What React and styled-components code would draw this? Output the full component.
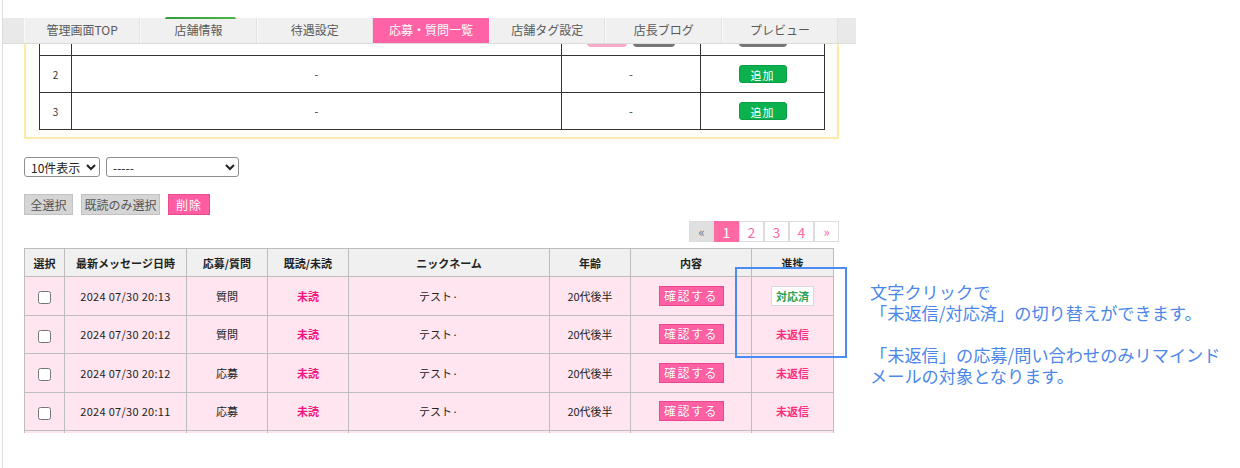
import React from "react";
import styled, { createGlobalStyle, css } from "styled-components";

const GlobalStyle = createGlobalStyle`
  html, body {
    margin: 0;
    padding: 0;
    background: #fff;
  }
  body {
    font-family: "Noto Sans CJK JP", "Noto Sans", sans-serif;
    color: #333;
  }
`;

const Screen = styled.div`
  position: relative;
  display: flex;
  width: 1240px;
  height: 468px;
  overflow: hidden;
`;

const Frame = styled.div`
  position: relative;
  flex: 0 0 853px;
  height: 468px;
  margin-left: 2px;
  border-left: 1px solid #dcdcdc;
  overflow: hidden;
`;

// fixed header that the page scrolls under
const Header = styled.div`
  position: absolute;
  top: 0;
  left: 0;
  right: 0;
  height: 44px;
  padding-top: 18px;
  box-sizing: border-box;
  background: #fff;
  z-index: 5;
`;

const Nav = styled.nav`
  display: grid;
  grid-template-columns: repeat(7, 116.3px);
  height: 26px;
  padding-left: 21px;
  box-sizing: border-box;
  background: #e9e9e9;
  border-bottom: 1px solid #dcdcdc;
`;

const Tab = styled.a`
  position: relative;
  display: flex;
  align-items: center;
  justify-content: center;
  padding-bottom: 3px;
  font-size: 12px;
  color: #5a5a5a;
  background: #f0f0f0;
  border-right: 1px solid #e2e2e2;
  border-left: 1px solid #fafafa;
  ${(p) =>
    p.$active &&
    css`
      background: #ff62a5;
      color: #fff;
      border-color: #ff62a5;
    `}
`;

const TabBadge = styled.span`
  position: absolute;
  top: -1px;
  left: 24px;
  width: 71px;
  height: 2px;
  border-radius: 2px 2px 0 0;
  background: linear-gradient(90deg, #2f9d3a, #4cb845);
`;

const Content = styled.div`
  display: flex;
  flex-direction: column;
  padding: 3px 14px 0 21px;
`;

const ShopBox = styled.div`
  width: 815px;
  box-sizing: border-box;
  padding: 13px 13px 7px;
  border: 2px solid #fde9a8;
  background: #fffdf7;
`;

const ShopTable = styled.table`
  width: 785px;
  table-layout: fixed;
  border-collapse: collapse;
  border: 1px solid #333;
  background: #fff;
`;

const ShopCell = styled.td`
  height: 36px;
  padding: 0;
  border: 1px solid #333;
  text-align: center;
  font-size: ${(p) => (p.$small ? "10px" : "11px")};
  color: #333;
`;

// buttons of the row scrolled under the header, only their lower edge shows
const MiniButton = styled.span`
  display: inline-block;
  width: ${(p) => p.$w}px;
  height: 18px;
  border-radius: 4px;
  background: ${(p) => p.$bg};
  vertical-align: middle;
  & + & {
    margin-left: 6px;
  }
`;

const AddButton = styled.span`
  display: inline-block;
  width: 48px;
  height: 18px;
  line-height: 18px;
  box-sizing: border-box;
  border-radius: 3px;
  border: 1px solid #0a9e44;
  background: #0bb14c;
  color: #fff;
  font-size: 11px;
  letter-spacing: 1px;
`;

const Controls = styled.div`
  display: flex;
  gap: 6px;
  margin-top: 18px;
`;

const Select = styled.select`
  width: ${(p) => p.$w}px;
  height: 20px;
  padding: 0 2px;
  font-family: "Noto Sans CJK JP", sans-serif;
  font-size: 12px;
  color: #222;
  border: 1px solid #8f8f8f;
  border-radius: 3px;
  background: #fff;
`;

const ActionRow = styled.div`
  display: flex;
  gap: 8px;
  margin-top: 17px;
`;

const ActionButton = styled.button`
  width: ${(p) => p.$w}px;
  height: 21px;
  padding: 0;
  font-family: "Noto Sans CJK JP", sans-serif;
  font-size: 12px;
  color: #555;
  background: #d5d5d5;
  border: 1px solid #c2c2c2;
  ${(p) =>
    p.$danger &&
    css`
      color: #fff;
      background: #ff5ca2;
      border-color: #ec4a90;
      letter-spacing: 1px;
    `}
`;

const Pager = styled.div`
  display: flex;
  justify-content: flex-end;
  margin-top: 6px;
  width: 815px;
`;

const PageItem = styled.a`
  display: flex;
  align-items: center;
  justify-content: center;
  width: 25px;
  height: 21px;
  box-sizing: border-box;
  border: 1px solid #dcdcdc;
  background: #fff;
  color: #ff6aa5;
  font-size: 14px;
  ${(p) =>
    p.$arrow &&
    css`
      font-size: 13px;
    `}
  ${(p) =>
    p.$muted &&
    css`
      background: #e0e0e0;
      color: #777;
    `}
  ${(p) =>
    p.$active &&
    css`
      background: #ff6aa5;
      border-color: #ff6aa5;
      color: #fff;
    `}
`;

const TableClip = styled.div`
  margin-top: 6px;
  height: 185px;
  overflow: hidden;
`;

const DataTable = styled.table`
  width: 809px;
  table-layout: fixed;
  border-collapse: collapse;
`;

const HeadCell = styled.th`
  height: 27px;
  padding: 0;
  border: 1px solid #bdbdbd;
  background: #f0f0f0;
  font-size: 11px;
  font-weight: bold;
  color: #222;
`;

const Cell = styled.td`
  height: 37.5px;
  padding: 0 ${(p) => p.$shiftLeft || 0}px 0 0;
  border: 1px solid #bdbdbd;
  background: #ffe5ef;
  text-align: center;
  font-size: 11px;
  color: #222;
  ${(p) =>
    p.$mono &&
    css`
      white-space: pre;
      letter-spacing: 0.3px;
    `}
`;

const Check = styled.input`
  width: 13px;
  height: 13px;
  margin: 0;
  vertical-align: middle;
`;

const Unread = styled.span`
  font-weight: bold;
  color: #f5157f;
`;

const ConfirmButton = styled.span`
  display: inline-block;
  width: 65px;
  height: 20px;
  line-height: 18px;
  box-sizing: border-box;
  border: 1px solid #e8468e;
  background: #ff5fa3;
  color: #fff;
  font-size: 12px;
  letter-spacing: 1.5px;
  text-shadow: 0 0 1px rgba(160, 20, 80, 0.4);
`;

const StatusBadge = styled.span`
  display: inline-block;
  width: 43px;
  height: 20px;
  line-height: 18px;
  box-sizing: border-box;
  border: 1px solid #d8d8d8;
  background: #fff;
  color: #2c9f52;
  font-weight: bold;
  font-size: 11px;
`;

const StatusText = styled.span`
  font-weight: bold;
  color: #ff2d80;
`;

const Highlight = styled.div`
  position: absolute;
  left: 735px;
  top: 267px;
  width: 112px;
  height: 91px;
  box-sizing: border-box;
  border: 2px solid #4a8cf4;
  z-index: 6;
`;

const Note = styled.div`
  flex: 1;
  padding: 281px 0 0 14px;
  font-size: 17.2px;
  line-height: 21px;
  color: #4b87ea;
  white-space: nowrap;
`;

const NoteParagraph = styled.p`
  margin: 0;
  & + & {
    margin-top: 21px;
  }
`;

const tabs = ["管理画面TOP", "店舗情報", "待遇設定", "応募・質問一覧", "店舗タグ設定", "店長ブログ", "プレビュー"];

const headCols = [
  { label: "選択", w: 40 },
  { label: "最新メッセージ日時", w: 122 },
  { label: "応募/質問", w: 81 },
  { label: "既読/未読", w: 81 },
  { label: "ニックネーム", w: 201 },
  { label: "年齢", w: 81 },
  { label: "内容", w: 121 },
  { label: "進捗", w: 82 },
];

const messages = [
  { date: "2024 07/30 20:13", kind: "質問", done: true },
  { date: "2024 07/30 20:12", kind: "質問", done: false },
  { date: "2024 07/30 20:12", kind: "応募", done: false },
  { date: "2024 07/30 20:11", kind: "応募", done: false },
];

const App = () => {
  return (
    <Screen>
      <GlobalStyle />
      <Frame>
        <Header>
          <Nav>
            {tabs.map((t, i) => (
              <Tab key={t} $active={i === 3}>
                {i === 1 && <TabBadge />}
                {t}
              </Tab>
            ))}
          </Nav>
        </Header>

        <Content>
          <ShopBox>
            <ShopTable>
              <colgroup>
                <col style={{ width: 32 }} />
                <col style={{ width: 490 }} />
                <col style={{ width: 139 }} />
                <col style={{ width: 124 }} />
              </colgroup>
              <tbody>
                <tr>
                  <ShopCell $small />
                  <ShopCell />
                  <ShopCell>
                    <MiniButton $w={40} $bg="#f7a9c8" />
                    <MiniButton $w={42} $bg="#777" />
                  </ShopCell>
                  <ShopCell>
                    <MiniButton $w={48} $bg="#777" />
                  </ShopCell>
                </tr>
                {[2, 3].map((n) => (
                  <tr key={n}>
                    <ShopCell $small>{n}</ShopCell>
                    <ShopCell>-</ShopCell>
                    <ShopCell>-</ShopCell>
                    <ShopCell>
                      <AddButton>追加</AddButton>
                    </ShopCell>
                  </tr>
                ))}
              </tbody>
            </ShopTable>
          </ShopBox>

          <Controls>
            <Select $w={76} defaultValue="10">
              <option value="10">10件表示</option>
            </Select>
            <Select $w={133} defaultValue="">
              <option value="">-----</option>
            </Select>
          </Controls>

          <ActionRow>
            <ActionButton $w={49}>全選択</ActionButton>
            <ActionButton $w={79}>既読のみ選択</ActionButton>
            <ActionButton $w={42} $danger>
              削除
            </ActionButton>
          </ActionRow>

          <Pager>
            <PageItem $muted $arrow>«</PageItem>
            <PageItem $active>1</PageItem>
            <PageItem>2</PageItem>
            <PageItem>3</PageItem>
            <PageItem>4</PageItem>
            <PageItem $arrow>»</PageItem>
          </Pager>

          <TableClip>
            <DataTable>
              <colgroup>
                {headCols.map((c) => (
                  <col key={c.label} style={{ width: c.w }} />
                ))}
              </colgroup>
              <thead>
                <tr>
                  {headCols.map((c) => (
                    <HeadCell key={c.label}>{c.label}</HeadCell>
                  ))}
                </tr>
              </thead>
              <tbody>
                {messages.map((m, i) => (
                  <tr key={i}>
                    <Cell>
                      <Check type="checkbox" />
                    </Cell>
                    <Cell $mono>{m.date}</Cell>
                    <Cell>{m.kind}</Cell>
                    <Cell>
                      <Unread>未読</Unread>
                    </Cell>
                    <Cell $shiftLeft={21}>テスト·</Cell>
                    <Cell>20代後半</Cell>
                    <Cell>
                      <ConfirmButton>確認する</ConfirmButton>
                    </Cell>
                    <Cell>
                      {m.done ? <StatusBadge>対応済</StatusBadge> : <StatusText>未返信</StatusText>}
                    </Cell>
                  </tr>
                ))}
                {/* next row, scrolled out of the clip */}
                <tr>
                  {headCols.map((c) => (
                    <Cell key={c.label} />
                  ))}
                </tr>
              </tbody>
            </DataTable>
          </TableClip>
        </Content>
      </Frame>

      <Highlight />

      <Note>
        <NoteParagraph>
          文字クリックで
          <br />
          「未返信/対応済」の切り替えができます。
        </NoteParagraph>
        <NoteParagraph>
          「未返信」の応募/問い合わせのみリマインド
          <br />
          メールの対象となります。
        </NoteParagraph>
      </Note>
    </Screen>
  );
};

export default App;
